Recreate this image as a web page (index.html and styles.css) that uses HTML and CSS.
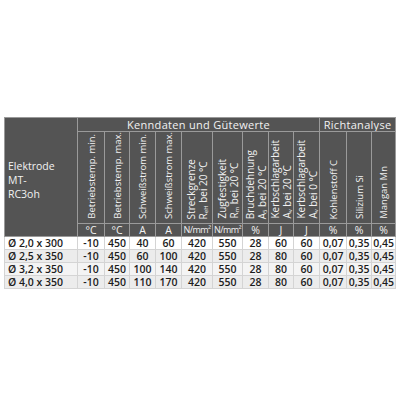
FILE: index.html
```html
<!DOCTYPE html>
<html>
<head>
<meta charset="utf-8">
<link rel="stylesheet" href="styles.css">
</head>
<body>
<table class="spec">
  <colgroup>
    <col style="width:73px"><col style="width:27px"><col style="width:25px"><col style="width:26px"><col style="width:26px"><col style="width:31px"><col style="width:30px"><col style="width:26px"><col style="width:25px"><col style="width:26px"><col style="width:27px"><col style="width:25px"><col style="width:24px">
  </colgroup>
  <thead>
    <tr class="h1">
      <th rowspan="3" class="name">Elektrode<br>MT-<br>RC3oh</th>
      <th colspan="9">Kenndaten und Gütewerte</th>
      <th colspan="3">Richtanalyse</th>
    </tr>
    <tr class="h2">
      <th><div class="rot">Betriebstemp. min.</div></th>
      <th><div class="rot">Betriebstemp. max.</div></th>
      <th><div class="rot">Schweißstrom min.</div></th>
      <th><div class="rot">Schweißstrom max.</div></th>
      <th><div class="rot two">Streckgrenze<br>R<sub>eH</sub> bei 20 °C</div></th>
      <th><div class="rot two">Zugfestigkeit<br>R<sub>m</sub> bei 20 °C</div></th>
      <th><div class="rot two">Bruchdehnung<br>A<sub>5</sub> bei 20 °C</div></th>
      <th><div class="rot two">Kerbschlagarbeit<br>A<sub>v</sub> bei 20 °C</div></th>
      <th><div class="rot two">Kerbschlagarbeit<br>A<sub>v</sub> bei 0 °C</div></th>
      <th><div class="rot">Kohlenstoff C</div></th>
      <th><div class="rot">Silizium Si</div></th>
      <th><div class="rot">Mangan Mn</div></th>
    </tr>
    <tr class="h3">
      <th>°C</th><th>°C</th><th>A</th><th>A</th><th class="nm">N/mm²</th><th class="nm">N/mm²</th><th>%</th><th>J</th><th>J</th><th>%</th><th>%</th><th>%</th>
    </tr>
  </thead>
  <tbody>
    <tr><td class="name">Ø 2,0 x 300</td><td>-10</td><td>450</td><td>40</td><td>60</td><td>420</td><td>550</td><td>28</td><td>60</td><td>60</td><td>0,07</td><td>0,35</td><td>0,45</td></tr>
    <tr><td class="name">Ø 2,5 x 350</td><td>-10</td><td>450</td><td>60</td><td>100</td><td>420</td><td>550</td><td>28</td><td>80</td><td>60</td><td>0,07</td><td>0,35</td><td>0,45</td></tr>
    <tr><td class="name">Ø 3,2 x 350</td><td>-10</td><td>450</td><td>100</td><td>140</td><td>420</td><td>550</td><td>28</td><td>80</td><td>60</td><td>0,07</td><td>0,35</td><td>0,45</td></tr>
    <tr><td class="name">Ø 4,0 x 350</td><td>-10</td><td>450</td><td>110</td><td>170</td><td>420</td><td>550</td><td>28</td><td>80</td><td>60</td><td>0,07</td><td>0,35</td><td>0,45</td></tr>
  </tbody>
</table>
</body>
</html>
```
FILE: styles.css
```css
html, body {
  margin: 0;
  background: #ffffff;
}
body {
  padding: 117px 0 0 4px;
  font-family: "Open Sans", "Noto Sans", sans-serif;
}
.spec {
  border-collapse: collapse;
  table-layout: fixed;
  width: 391px;
}
.spec th {
  background: #545454;
  color: #f2f2f2;
  font-weight: 400;
  border: 1px solid #9a9a9a;
  padding: 0;
  overflow: hidden;
}
.spec .h1 th {
  height: 13px;
  font-size: 11px;
  line-height: 13px;
  text-align: center;
  letter-spacing: 0.3px;
}
.spec th.name {
  text-align: left;
  vertical-align: middle;
  font-size: 10.5px;
  line-height: 14px;
  letter-spacing: 0;
  padding: 6px 0 0 3px;
}
.spec .h2 th {
  height: 86px;
  vertical-align: bottom;
  text-align: center;
}
.rot {
  writing-mode: vertical-rl;
  transform: rotate(180deg);
  font-size: 9.5px;
  line-height: 11px;
  text-align: start;
  white-space: nowrap;
  margin: 0 auto;
  padding-top: 4px;
}
.rot.two {
  font-size: 10px;
  line-height: 12px;
}
.rot sub {
  font-size: 6px;
  line-height: 0;
}
.spec .h3 th {
  height: 12px;
  font-size: 10.5px;
  line-height: 12px;
  text-align: center;
}
.spec .h3 th.nm {
  font-size: 9px;
  letter-spacing: -0.6px;
}
.spec td {
  height: 12px;
  font-size: 10.5px;
  line-height: 12px;
  font-weight: 600;
  color: #1c1c1c;
  text-align: center;
  border: 1px solid #d4d4d4;
  padding: 0;
  white-space: nowrap;
  overflow: hidden;
}
.spec td.name {
  text-align: left;
  padding-left: 3px;
}
.spec tbody tr:nth-child(1) td { background: #ffffff; }
.spec tbody tr:nth-child(2) td { background: #ececec; }
.spec tbody tr:nth-child(3) td { background: #f4f4f4; }
.spec tbody tr:nth-child(4) td { background: #ececec; }
```
